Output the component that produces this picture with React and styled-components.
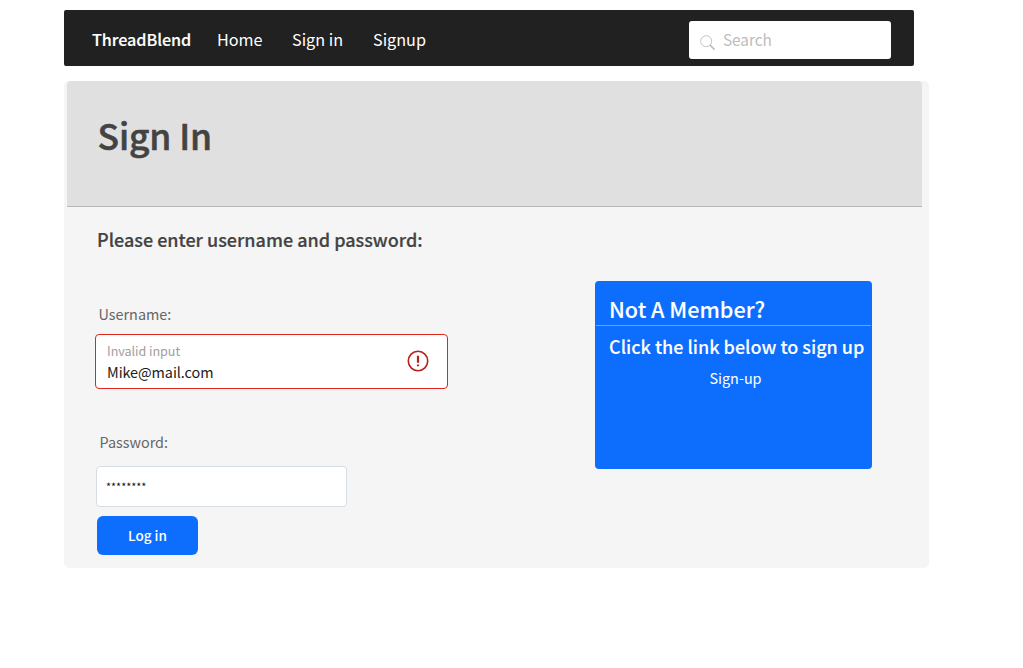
import React from "react";
import styled, { createGlobalStyle } from "styled-components";

const GlobalStyle = createGlobalStyle`
  * { box-sizing: border-box; }
  body {
    margin: 0;
    background: #fff;
    font-family: "Noto Sans CJK SC", "Noto Sans", sans-serif;
    font-kerning: normal;
  }
  h1, h2, h3, p { margin: 0; }
  a { color: inherit; text-decoration: none; }
`;

const Page = styled.div`
  width: 1023px;
  height: 668px;
  padding: 10px 0 0 64px;
  overflow: hidden;
`;

const NavBar = styled.nav`
  display: flex;
  align-items: flex-start;
  width: 850px;
  height: 56px;
  padding: 11px 23px 0 28px;
  border-radius: 2px;
  background: #212121;
  color: #fff;
  line-height: 36px;
  font-size: 16.2px;
  white-space: nowrap;
`;

const Brand = styled.a`
  width: 125px;
  font-weight: 500;
  letter-spacing: -0.06px;
  -webkit-text-stroke: 0.15px currentColor;
`;

const NavLink = styled.a`
  width: ${(p) => p.$width}px;
`;

const SearchBox = styled.label`
  display: flex;
  align-items: center;
  width: 202px;
  height: 38px;
  margin-left: auto;
  padding: 0 10px 0 11px;
  border-radius: 3px;
  background: #fff;
  svg { margin-top: 5px; }
`;

const SearchText = styled.span`
  margin: -3px 0 0 7px;
  color: #bdbdbd;
  font-size: 15.3px;
`;

const Panel = styled.main`
  width: 865px;
  height: 487px;
  margin-top: 15px;
  padding-left: 3px;
  border-radius: 5px;
  background: #f5f5f5;
  overflow: hidden;
`;

const Banner = styled.header`
  width: 855px;
  height: 126px;
  padding: 30px 0 0 30.5px;
  border-bottom: 1px solid #b8b8b8;
  border-radius: 4px 4px 0 0;
  background: #e0e0e0;
`;

const Title = styled.h1`
  color: #434343;
  font-size: 35.4px;
  line-height: 48px;
  font-weight: 500;
  letter-spacing: -0.1px;
  -webkit-text-stroke: 0.55px currentColor;
`;

const Content = styled.div`
  display: flex;
  justify-content: space-between;
  padding-right: 57px;
`;

const Form = styled.form`
  width: 400px;
  padding: 19px 0 0 28px;
`;

const Prompt = styled.h2`
  margin-left: 2px;
  color: #434343;
  font-size: 18px;
  line-height: 26px;
  font-weight: 500;
  white-space: nowrap;
  -webkit-text-stroke: 0.2px currentColor;
`;

const Label = styled.label`
  display: block;
  margin: ${(p) => p.$top}px 0 0 ${(p) => p.$left}px;
  color: #666;
  font-size: 14.4px;
  line-height: 22px;
`;

const ErrorField = styled.div`
  display: flex;
  align-items: center;
  justify-content: space-between;
  width: 353px;
  height: 55px;
  margin-top: 9px;
  padding: 0 18px 1px 11px;
  border: 1px solid #e1251b;
  border-radius: 4px;
  background: #fff;
`;

const FieldLines = styled.div`
  display: flex;
  flex-direction: column;
  margin-top: -1px;
  line-height: 21px;
`;

const Hint = styled.span`
  color: #9e9e9e;
  font-size: 12.6px;
  letter-spacing: -0.05px;
`;

const Value = styled.span`
  color: #212121;
  font-size: 14.4px;
  letter-spacing: -0.06px;
`;

const PasswordField = styled.div`
  width: 251px;
  height: 41px;
  margin: 13px 0 0 1px;
  padding: 0 9px;
  border: 1px solid #d5dde5;
  border-radius: 4px;
  background: #fff;
  color: #111;
  font-size: 10.8px;
  line-height: 39px;
`;

const LoginButton = styled.button`
  display: block;
  width: 101px;
  height: 39px;
  margin: 9px 0 0 2px;
  padding: 0;
  border: 0;
  border-radius: 6px;
  background: #0d6efd;
  color: #fff;
  font-family: inherit;
  font-size: 13.5px;
  font-weight: 500;
  line-height: 37px;
`;

const MemberCard = styled.aside`
  width: 277px;
  height: 188px;
  margin-top: 74px;
  border-radius: 4px;
  background: #0d6efd;
  color: #fff;
  white-space: nowrap;
`;

const CardTitle = styled.h2`
  height: 45px;
  margin: 0 1px;
  padding: 14px 0 0 13px;
  border-bottom: 1px solid #66a3fe;
  font-size: 21.6px;
  line-height: 28px;
  font-weight: 500;
  -webkit-text-stroke: 0.1px currentColor;
`;

const CardText = styled.h3`
  padding: 7px 0 0 14px;
  font-size: 18px;
  line-height: 26px;
  font-weight: 500;
  -webkit-text-stroke: 0.1px currentColor;
`;

const SignupLink = styled.a`
  display: block;
  margin: 8px 0 0 4px;
  font-size: 14.4px;
  line-height: 22px;
  text-align: center;
`;

function SearchIcon() {
  return (
    <svg width="16" height="16" viewBox="0 0 16 16" fill="none" stroke="#bdbdbd">
      <circle cx="6.2" cy="6.2" r="5.5" strokeWidth="0.9" />
      <path d="M10.1 10.1 14.6 14.6" strokeWidth="1.5" />
    </svg>
  );
}

function AlertIcon() {
  return (
    <svg width="22" height="22" viewBox="0 0 22 22" fill="none" stroke="#b9201a">
      <circle cx="11" cy="11" r="9.7" strokeWidth="1.6" />
      <path d="M11 5.7V12.8M11 14.4V16.3" strokeWidth="2.2" />
    </svg>
  );
}

export default function App() {
  return (
    <>
      <GlobalStyle />
      <Page>
        <NavBar>
          <Brand>ThreadBlend</Brand>
          <NavLink $width={75}>Home</NavLink>
          <NavLink $width={81}>Sign in</NavLink>
          <NavLink $width={60}>Signup</NavLink>
          <SearchBox>
            <SearchIcon />
            <SearchText>Search</SearchText>
          </SearchBox>
        </NavBar>
        <Panel>
          <Banner>
            <Title>Sign In</Title>
          </Banner>
          <Content>
            <Form>
              <Prompt>Please enter username and password:</Prompt>
              <Label $top={51} $left={3.5}>Username:</Label>
              <ErrorField>
                <FieldLines>
                  <Hint>Invalid input</Hint>
                  <Value>Mike@mail.com</Value>
                </FieldLines>
                <AlertIcon />
              </ErrorField>
              <Label $top={42} $left={4.5}>Password:</Label>
              <PasswordField>********</PasswordField>
              <LoginButton type="button">Log in</LoginButton>
            </Form>
            <MemberCard>
              <CardTitle>Not A Member?</CardTitle>
              <CardText>Click the link below to sign up</CardText>
              <SignupLink>Sign-up</SignupLink>
            </MemberCard>
          </Content>
        </Panel>
      </Page>
    </>
  );
}
